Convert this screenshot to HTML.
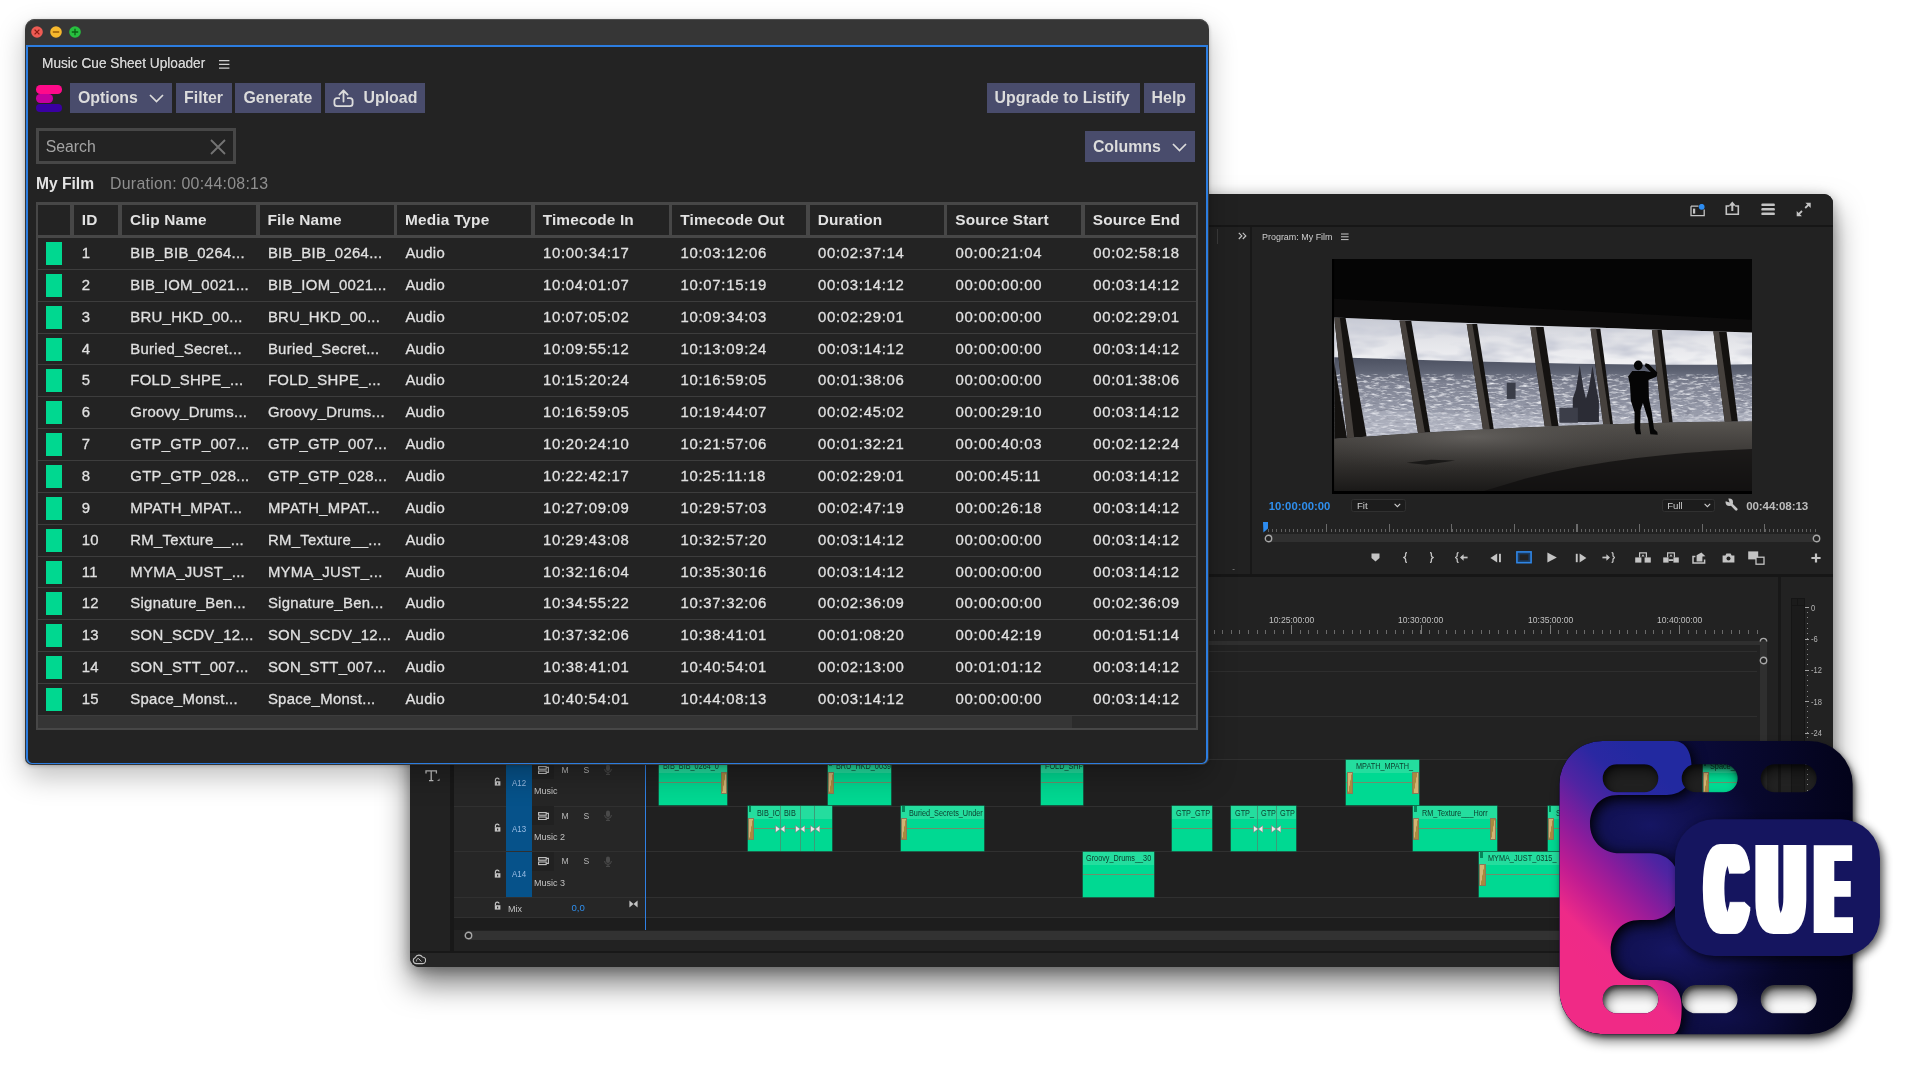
<!DOCTYPE html>
<html lang="en"><head><meta charset="utf-8"><title>Music Cue Sheet Uploader</title>
<style>
*{box-sizing:border-box}
html,body{margin:0;padding:0}
body{width:1920px;height:1080px;background:#fff;overflow:hidden;position:relative;font-family:"Liberation Sans",sans-serif;-webkit-font-smoothing:antialiased}
.abs{position:absolute}
/* ---------- Premiere window ---------- */
#pr{position:absolute;left:410px;top:194px;width:1423px;height:773px;background:#222;border-radius:0 9px 9px 9px;box-shadow:0 17px 30px rgba(0,0,0,.50),0 3px 14px rgba(0,0,0,.30);overflow:hidden;color:#bdbdbd;will-change:transform}
#pr .t{position:absolute;white-space:nowrap;line-height:1}
/* ---------- Plugin window ---------- */
#pw{position:absolute;left:25px;top:19px;width:1183.5px;height:746px;background:#363636;border-radius:10px 10px 7px 7px;box-shadow:0 12px 28px rgba(0,0,0,.25),0 1px 4px rgba(0,0,0,.22),inset 0 1px 0 #4e4e4e;overflow:hidden;will-change:transform}
#pw .panel{position:absolute;left:1px;top:26px;width:1181.5px;height:719px;background:#232323;border:2px solid #2c7de0;border-bottom-width:1.4px;border-radius:0 0 6px 6px}
.tl{position:absolute;top:7px;width:12px;height:12px;border-radius:50%}
.btn{position:absolute;top:83px;height:30px;background:#494c6c;color:#dcdcdc;font-weight:700;font-size:15.9px;line-height:30px;white-space:nowrap}
.btn span{position:absolute;top:.2px;left:0}
#pw .t{position:absolute;white-space:nowrap;line-height:1}
.hc{position:absolute;top:205px;height:30px;background:#232323;color:#e2e2e2;font-weight:700;font-size:15.4px;letter-spacing:.16px;line-height:30.2px;white-space:nowrap;overflow:hidden}
.row{position:absolute;left:38px;width:1158px;height:31px;border-bottom:1.5px solid #3d3d3d;color:#e0e0e0;font-size:14.9px;letter-spacing:.3px;line-height:30.4px;white-space:nowrap}
.row i{position:absolute;left:7.6px;top:4px;width:16.6px;height:23px;background:#00d890}
.row b{position:absolute;top:0;font-weight:400;-webkit-text-stroke:.28px #e0e0e0}
.row b.n{letter-spacing:.72px}
</style></head>
<body>
<div id="pr">
<div class="abs" style="left:0.00px;top:0.00px;width:1423.00px;height:31.20px;background:#212121;"></div>
<div class="abs" style="left:0.00px;top:31.20px;width:1423.00px;height:1.60px;background:#161616;"></div>
<svg class="abs" style="left:1279.60px;top:9.60px;" width="16" height="13" viewBox="0 0 16 13"><path d="M1 2.2H8.5M14.2 5.6V11.6H1V2.2" fill="none" stroke="#c4c4c4" stroke-width="1.3"/><rect x="3" y="4.6" width="2.2" height="5" fill="#c4c4c4"/><circle cx="11.7" cy="2.8" r="2.9" fill="#2d8cf0"/></svg>
<svg class="abs" style="left:1315.40px;top:7.40px;" width="15" height="15" viewBox="0 0 15 15"><path d="M4.4 5H1.3V13.3H13.3V5H10.2" fill="none" stroke="#c4c4c4" stroke-width="1.6"/><path d="M7.3 10V3.6" fill="none" stroke="#c4c4c4" stroke-width="2"/><path d="M3.7 4.8L7.3 .5L10.9 4.8Z" fill="#c4c4c4"/></svg>
<svg class="abs" style="left:1351.00px;top:8.60px;" width="15" height="13" viewBox="0 0 15 13"><rect x=".3" y=".5" width="13.6" height="2.6" rx="1.2" fill="#c4c4c4"/><rect x=".3" y="5" width="13.6" height="2.6" rx="1.2" fill="#c4c4c4"/><rect x=".3" y="9.5" width="13.6" height="2.6" rx="1.2" fill="#c4c4c4"/></svg>
<svg class="abs" style="left:1386.40px;top:8.00px;" width="16" height="15" viewBox="0 0 16 15"><path d="M9.2 6L12.4 2.8M6 9L2.8 12.2" fill="none" stroke="#c4c4c4" stroke-width="1.8"/><path d="M9.4 .7H14.7V6ZM.7 9V14.3H6Z" fill="#c4c4c4"/></svg>
<div class="abs" style="left:798.00px;top:32.80px;width:42.20px;height:347.40px;background:#212121;"></div>
<div class="abs" style="left:840.20px;top:32.80px;width:2.00px;height:347.40px;background:#181818;"></div>
<div class="abs" style="left:807.00px;top:35.00px;width:0.60px;height:15.00px;background:#3a3a3a;"></div>
<svg class="abs" style="left:827.60px;top:37.80px;" width="9" height="8" viewBox="0 0 9 8"><path d="M.8 .8L3.8 3.9L.8 7M4.8 .8L7.8 3.9L4.8 7" fill="none" stroke="#c4c4c4" stroke-width="1.2"/></svg>
<span class="t" style="left:852.40px;top:37.82px;font-size:9.9px;color:#cfcfcf;transform:scaleX(.905);transform-origin:0 0">Program: My Film</span>
<svg class="abs" style="left:931.00px;top:39.20px;" width="8" height="8" viewBox="0 0 8 8"><path d="M0 1H7.6M0 3.8H7.6M0 6.6H7.6" stroke="#c8c8c8" stroke-width="1"/></svg>
<svg class="abs" style="left:921.80px;top:64.80px" width="420.2" height="235.6" viewBox="43 38 1815 1017" preserveAspectRatio="none"><defs>
<linearGradient id="sky" x1="0" y1="0" x2="0" y2="1"><stop offset="0" stop-color="#c2c5cf"/><stop offset=".45" stop-color="#e2e3e8"/><stop offset="1" stop-color="#f4f4f6"/></linearGradient>
<linearGradient id="city" x1="0" y1="0" x2="0" y2="1"><stop offset="0" stop-color="#4b5060"/><stop offset=".16" stop-color="#5d6272"/><stop offset=".3" stop-color="#7d8191"/><stop offset=".6" stop-color="#9599a8"/><stop offset="1" stop-color="#aeb1be"/></linearGradient>
<linearGradient id="floor" x1="0" y1="0" x2="0" y2="1"><stop offset="0" stop-color="#575450"/><stop offset=".3" stop-color="#45423f"/><stop offset=".7" stop-color="#2c2a28"/><stop offset="1" stop-color="#1a1918"/></linearGradient>
<radialGradient id="fl2" cx=".33" cy=".22" r=".5"><stop offset="0" stop-color="#6a6764" stop-opacity=".75"/><stop offset="1" stop-color="#3a3836" stop-opacity="0"/></radialGradient>
<filter id="nz" x="0" y="0" width="100%" height="100%"><feTurbulence type="fractalNoise" baseFrequency=".028 .11" numOctaves="3" seed="7"/><feColorMatrix type="matrix" values="0 0 0 0 .86  0 0 0 0 .87  0 0 0 0 .91  2.6 0 0 0 -1.25"/><feComposite in2="SourceGraphic" operator="in"/></filter>
<filter id="cl" x="0" y="0" width="100%" height="100%"><feTurbulence type="fractalNoise" baseFrequency=".005 .016" numOctaves="3" seed="11"/><feColorMatrix type="matrix" values="0 0 0 0 .58  0 0 0 0 .60  0 0 0 0 .68  2.6 0 0 0 -1.05"/><feComposite in2="SourceGraphic" operator="in"/></filter>
<filter id="nd" x="0" y="0" width="100%" height="100%"><feTurbulence type="fractalNoise" baseFrequency=".03 .12" numOctaves="2" seed="21"/><feColorMatrix type="matrix" values="0 0 0 0 .2  0 0 0 0 .21  0 0 0 0 .27  2.8 0 0 0 -1.5"/><feComposite in2="SourceGraphic" operator="in"/></filter>
<clipPath id="win"><path d="M52 290Q950 330 1858 355V740Q950 745 52 815Z"/></clipPath>
</defs><rect x="43" y="38" width="1815" height="1017" fill="#000"/><rect x="52" y="38" width="1806" height="1002" fill="#050505"/><path d="M52 210Q900 250 1858 300V355Q950 330 52 290Z" fill="#0c0b0b"/><g clip-path="url(#win)"><rect x="52" y="280" width="1806" height="230" fill="url(#sky)"/><rect x="52" y="280" width="1806" height="215" fill="#fff" filter="url(#cl)"/><path d="M52 462Q500 478 1000 488T1858 492V830H52Z" fill="url(#city)"/><rect x="52" y="545" width="1806" height="280" fill="#fff" filter="url(#nd)"/><rect x="52" y="535" width="1806" height="290" fill="#fff" filter="url(#nz)"/><path d="M52 690Q600 700 1000 720T1858 700V830H52Z" fill="#c4c6d0" opacity=".35"/><path d="M1083 742V640L1097 600L1113 498L1130 600L1140 640L1152 600L1168 500L1186 600L1196 650V742Z" fill="#2b2c35"/><rect x="1025" y="680" width="80" height="65" fill="#3c3e49"/><rect x="798" y="572" width="38" height="70" fill="#3a3d48"/><path d="M52 284H100L195 819H110Z" fill="#141210"/><path d="M52 284H76L140 819H110Z" fill="#46413d"/><path d="M335 304H385L468 791H415Z" fill="#141210"/><path d="M335 304H359L445 791H415Z" fill="#46413d"/><path d="M625 319H670L742 774H695Z" fill="#141210"/><path d="M625 319H649L725 774H695Z" fill="#46413d"/><path d="M900 331H957L1022 761H962Z" fill="#141210"/><path d="M900 331H924L992 761H962Z" fill="#46413d"/><path d="M1160 339H1202L1257 754H1215Z" fill="#141210"/><path d="M1160 339H1184L1245 754H1215Z" fill="#46413d"/><path d="M1425 344H1467L1515 748H1470Z" fill="#141210"/><path d="M1425 344H1449L1500 748H1470Z" fill="#46413d"/><path d="M1690 349H1747L1797 746H1740Z" fill="#141210"/><path d="M1690 349H1714L1770 746H1740Z" fill="#46413d"/><path d="M52 480L108 812L52 818Z" fill="#141210"/></g><path d="M52 815Q950 745 1858 740V1040H52Z" fill="url(#floor)"/><path d="M52 815Q950 745 1858 740V1040H52Z" fill="url(#fl2)"/><path d="M880 985Q1300 880 1858 858V1040H700Z" fill="#100f0f" opacity=".75"/><path d="M365 918L470 905L575 908L450 926Z" fill="#1a1918"/><path d="M1347 497a19 21 0 1 1 38 0a19 21 0 1 1 -38 0Z" fill="#050505"/><path d="M1340 522L1322 545L1330 580L1334 650L1350 700L1350 770L1356 795H1378L1374 770L1376 690L1386 660L1408 730L1418 795L1450 797L1448 785L1434 772L1424 700L1412 640L1410 560L1446 545L1448 528L1412 492L1398 488L1394 500L1420 526L1392 522Z" fill="#050505"/></svg>
<span class="t" style="left:858.80px;top:306.53px;font-size:11.3px;color:#2f8fee;font-weight:700">10:00:00:00</span>
<div class="abs" style="left:941.40px;top:304.60px;width:54.20px;height:13.60px;background:#1c1c1c;background:#1c1c1c;border:1px solid #303030;border-radius:2.5px"></div>
<span class="t" style="left:947.00px;top:306.87px;font-size:9.6px;color:#d0d0d0">Fit</span>
<svg class="abs" style="left:984.40px;top:309.20px;" width="7" height="5" viewBox="0 0 7 5"><path d="M.6 .8L3.4 3.6L6.2 .8" fill="none" stroke="#cfcfcf" stroke-width="1.1"/></svg>
<div class="abs" style="left:1251.60px;top:304.60px;width:53.60px;height:13.60px;background:#1c1c1c;background:#1c1c1c;border:1px solid #303030;border-radius:2.5px"></div>
<span class="t" style="left:1257.20px;top:306.87px;font-size:9.6px;color:#d0d0d0">Full</span>
<svg class="abs" style="left:1294.40px;top:309.20px;" width="7" height="5" viewBox="0 0 7 5"><path d="M.6 .8L3.4 3.6L6.2 .8" fill="none" stroke="#cfcfcf" stroke-width="1.1"/></svg>
<svg class="abs" style="left:1314.60px;top:304.40px;" width="13" height="13" viewBox="0 0 13 13"><path d="M5.4 5.4L11.2 11.2" fill="none" stroke="#c4c4c4" stroke-width="2.7" stroke-linecap="round"/><circle cx="4.3" cy="4.3" r="3.7" fill="#c4c4c4"/><path d="M4.6 4.6L-.2 3V-.2H3Z" fill="#222"/></svg>
<span class="t" style="left:1336.20px;top:305.78px;font-size:11.6px;color:#bcbcbc;font-weight:700;letter-spacing:-.12px">00:44:08:13</span>
<div class="abs" style="left:857.60px;top:334.90px;width:551.60px;height:3.50px;background:none;background:repeating-linear-gradient(90deg,#606060 0 1px,transparent 1px 4.173px)"></div>
<div class="abs" style="left:916.00px;top:330.20px;width:494.00px;height:8.20px;background:none;background:repeating-linear-gradient(90deg,#6a6a6a 0 1.1px,transparent 1.1px 62.6px)"></div>
<div class="abs" style="left:855.60px;top:339.80px;width:554.00px;height:8.40px;background:#303030;border-radius:4px"></div>
<svg class="abs" style="left:853.00px;top:327.80px;" width="6" height="11" viewBox="0 0 6 11"><path d="M0 0H5V6.6L.4 10.6Z" fill="#2d8cf0"/></svg>
<svg class="abs" style="left:854.40px;top:339.50px;" width="9" height="9" viewBox="0 0 9 9"><circle cx="4.5" cy="4.5" r="3.2" fill="#222" stroke="#a8a8a8" stroke-width="1.4"/></svg>
<svg class="abs" style="left:1402.10px;top:339.50px;" width="9" height="9" viewBox="0 0 9 9"><circle cx="4.5" cy="4.5" r="3.2" fill="#222" stroke="#a8a8a8" stroke-width="1.4"/></svg>
<svg class="abs" style="left:960.50px;top:359.20px;" width="9" height="9" viewBox="0 0 9 9"><path d="M.5 .5H8.5V5L4.5 8.6L.5 5Z" fill="#c4c4c4"/></svg>
<svg class="abs" style="left:992.70px;top:358.20px;" width="5" height="11" viewBox="0 0 5 11"><path d="M4 .6C2.4 .6 2.6 2 2.6 3.4C2.6 4.8 1.4 5.2 .8 5.5C1.4 5.8 2.6 6.2 2.6 7.6C2.6 9 2.4 10.4 4 10.4" fill="none" stroke="#c4c4c4" stroke-width="1.3"/></svg>
<svg class="abs" style="left:1018.50px;top:358.20px;" width="5" height="11" viewBox="0 0 5 11"><path d="M1 .6C2.6 .6 2.4 2 2.4 3.4C2.4 4.8 3.6 5.2 4.2 5.5C3.6 5.8 2.4 6.2 2.4 7.6C2.4 9 2.6 10.4 1 10.4" fill="none" stroke="#c4c4c4" stroke-width="1.3"/></svg>
<svg class="abs" style="left:1044.50px;top:358.20px;" width="13" height="11" viewBox="0 0 13 11"><path d="M3.6 .6C2 .6 2.2 2 2.2 3.4C2.2 4.8 1.2 5.2 .6 5.5C1.2 5.8 2.2 6.2 2.2 7.6C2.2 9 2 10.4 3.6 10.4" fill="none" stroke="#c4c4c4" stroke-width="1.3"/><path d="M12.6 5.5H6.4" fill="none" stroke="#c4c4c4" stroke-width="1.7"/><path d="M8.6 2.2L5 5.5L8.6 8.8Z" fill="#c4c4c4"/></svg>
<svg class="abs" style="left:1079.60px;top:358.70px;" width="12" height="10" viewBox="0 0 12 10"><path d="M7.2 .6V9.4L.4 5Z" fill="#c4c4c4"/><rect x="9" y=".8" width="1.9" height="8.4" fill="#c4c4c4"/></svg>
<svg class="abs" style="left:1105.60px;top:357.40px;" width="16" height="12.6" viewBox="0 0 16 12.6"><rect x=".9" y=".9" width="14.2" height="10.8" fill="#1b3a5e" stroke="#2f86e6" stroke-width="1.6"/><rect x="3.6" y="3.4" width="8.8" height="5.8" fill="#222"/></svg>
<svg class="abs" style="left:1136.90px;top:358.20px;" width="10" height="11" viewBox="0 0 10 11"><path d="M.4 .4L9.8 5.5L.4 10.6Z" fill="#c4c4c4"/></svg>
<svg class="abs" style="left:1164.60px;top:358.70px;" width="12" height="10" viewBox="0 0 12 10"><rect x=".8" y=".8" width="1.9" height="8.4" fill="#c4c4c4"/><path d="M4.6 .6V9.4L11.4 5Z" fill="#c4c4c4"/></svg>
<svg class="abs" style="left:1191.50px;top:358.20px;" width="13" height="11" viewBox="0 0 13 11"><path d="M9.6 .6C11.2 .6 11 2 11 3.4C11 4.8 12 5.2 12.6 5.5C12 5.8 11 6.2 11 7.6C11 9 11.2 10.4 9.6 10.4" fill="none" stroke="#c4c4c4" stroke-width="1.3"/><path d="M.4 5.5H6.4" fill="none" stroke="#c4c4c4" stroke-width="1.7"/><path d="M4.4 2.2L8 5.5L4.4 8.8Z" fill="#c4c4c4"/></svg>
<svg class="abs" style="left:1225.00px;top:358.20px;" width="16" height="11" viewBox="0 0 16 11"><rect x=".2" y="5.4" width="6.2" height="5.2" fill="#c4c4c4"/><rect x="9.6" y="5.4" width="6.2" height="5.2" fill="#c4c4c4"/><path d="M4.6 5.4V.8H11.4V5.4" fill="none" stroke="#c4c4c4" stroke-width="1.2"/><path d="M6.4 4.4L8 2.2L9.6 4.4Z" fill="#c4c4c4"/></svg>
<svg class="abs" style="left:1253.00px;top:358.20px;" width="16" height="11" viewBox="0 0 16 11"><rect x=".2" y="5.4" width="5.4" height="5.2" fill="#c4c4c4"/><rect x="10.4" y="5.4" width="5.4" height="5.2" fill="#c4c4c4"/><rect x="5.6" y="7.2" width="4.8" height="1.8" fill="#c4c4c4"/><path d="M4.6 5.4V.8H11.4V5.4" fill="none" stroke="#c4c4c4" stroke-width="1.2"/><path d="M6.4 4.4L8 2.2L9.6 4.4Z" fill="#c4c4c4"/></svg>
<svg class="abs" style="left:1282.40px;top:357.70px;" width="14" height="12" viewBox="0 0 14 12"><path d="M3.4 4.6H1V11H12.6V7.6" fill="none" stroke="#c4c4c4" stroke-width="1.5"/><path d="M4.6 9.4V3.2L9.4 .4L13.4 4.2L10.4 4.6V9.4Z" fill="#c4c4c4"/></svg>
<svg class="abs" style="left:1311.80px;top:358.70px;" width="13" height="10" viewBox="0 0 13 10"><path d="M.6 2.4H3.4L4.4 .6H8.6L9.6 2.4H12.4V9.4H.6Z" fill="#c4c4c4"/><circle cx="6.5" cy="5.6" r="2" fill="#222"/></svg>
<svg class="abs" style="left:1337.90px;top:356.70px;" width="17" height="14" viewBox="0 0 17 14"><rect x=".2" y=".4" width="10" height="8" fill="#c4c4c4"/><rect x="8" y="6.2" width="8" height="7" fill="#222" stroke="#c4c4c4" stroke-width="1.3"/></svg>
<svg class="abs" style="left:1401.30px;top:358.70px;" width="10" height="10" viewBox="0 0 10 10"><path d="M5 .4V9.6M.4 5H9.6" fill="none" stroke="#c4c4c4" stroke-width="2.2"/></svg>
<span class="t" style="left:822.20px;top:371.23px;font-size:8px;color:#9a9a9a">-</span>
<div class="abs" style="left:798.00px;top:380.20px;width:625.00px;height:2.60px;background:#161616;"></div>
<span class="t" style="left:858.90px;top:421.16px;font-size:9.5px;color:#c2c2c2;transform:scaleX(.9);transform-origin:0 0">10:25:00:00</span>
<span class="t" style="left:988.20px;top:421.16px;font-size:9.5px;color:#c2c2c2;transform:scaleX(.9);transform-origin:0 0">10:30:00:00</span>
<span class="t" style="left:1117.50px;top:421.16px;font-size:9.5px;color:#c2c2c2;transform:scaleX(.9);transform-origin:0 0">10:35:00:00</span>
<span class="t" style="left:1246.80px;top:421.16px;font-size:9.5px;color:#c2c2c2;transform:scaleX(.9);transform-origin:0 0">10:40:00:00</span>
<div class="abs" style="left:795.30px;top:436.00px;width:553.00px;height:3.80px;background:none;background:repeating-linear-gradient(90deg,#6a6a6a 0 1px,transparent 1px 8.62px)"></div>
<div class="abs" style="left:752.20px;top:431.40px;width:594.80px;height:8.40px;background:none;background:repeating-linear-gradient(90deg,#7c7c7c 0 1.1px,transparent 1.1px 129.3px)"></div>
<div class="abs" style="left:798.00px;top:447.00px;width:559.00px;height:4.20px;background:#2f2f2f;"></div>
<div class="abs" style="left:1349.60px;top:447.00px;width:7.40px;height:276.00px;background:#2f2f2f;border-radius:3.7px 3.7px 0 0"></div>
<svg class="abs" style="left:1348.80px;top:442.80px;" width="9" height="9" viewBox="0 0 9 9"><path d="M1.3 4.6A3.2 3.2 0 0 1 7.7 4.6" fill="none" stroke="#a8a8a8" stroke-width="1.4"/></svg>
<svg class="abs" style="left:1348.80px;top:461.50px;" width="9" height="9" viewBox="0 0 9 9"><circle cx="4.5" cy="4.5" r="3.2" fill="#222" stroke="#a8a8a8" stroke-width="1.4"/></svg>
<div class="abs" style="left:798.00px;top:456.60px;width:549.00px;height:1.00px;background:#2e2e2e;"></div>
<div class="abs" style="left:798.00px;top:476.70px;width:549.00px;height:1.00px;background:#2e2e2e;"></div>
<div class="abs" style="left:798.00px;top:522.20px;width:549.00px;height:1.00px;background:#2e2e2e;"></div>
<div class="abs" style="left:798.00px;top:565.40px;width:549.00px;height:1.00px;background:#2e2e2e;"></div>
<div class="abs" style="left:0.00px;top:565.40px;width:40.40px;height:192.00px;background:#222;"></div>
<div class="abs" style="left:40.40px;top:383.00px;width:3.40px;height:375.00px;background:#181818;"></div>
<div class="abs" style="left:43.80px;top:565.40px;width:191.60px;height:158.00px;background:#262626;"></div>
<div class="abs" style="left:235.40px;top:566.00px;width:1112.00px;height:137.00px;background:#202020;"></div>
<div class="abs" style="left:43.80px;top:565.40px;width:1304.00px;height:1.00px;background:#303030;"></div>
<div class="abs" style="left:43.80px;top:611.60px;width:1304.00px;height:1.00px;background:#303030;"></div>
<div class="abs" style="left:43.80px;top:657.30px;width:1304.00px;height:1.00px;background:#303030;"></div>
<div class="abs" style="left:43.80px;top:703.00px;width:1304.00px;height:1.00px;background:#303030;"></div>
<div class="abs" style="left:43.80px;top:723.40px;width:1304.00px;height:1.00px;background:#303030;"></div>
<div class="abs" style="left:43.80px;top:724.40px;width:1304.00px;height:11.60px;background:#1d1d1d;"></div>
<div class="abs" style="left:54.00px;top:736.60px;width:1303.00px;height:9.40px;background:#323232;border-radius:4.7px 0 0 4.7px"></div>
<svg class="abs" style="left:54.20px;top:737.20px;" width="9" height="9" viewBox="0 0 9 9"><circle cx="4.5" cy="4.5" r="3.2" fill="#222" stroke="#a8a8a8" stroke-width="1.4"/></svg>
<svg class="abs" style="left:14.60px;top:576.00px;" width="16" height="12" viewBox="0 0 16 12"><path d="M1 3.4V.8H11.4V3.4M6.2 .8V10.4M4 10.6H8.4" fill="none" stroke="#c4c4c4" stroke-width="1.3"/><path d="M14.6 8.4V11H12Z" fill="#9a9a9a"/></svg>
<div class="abs" style="left:96.30px;top:566.00px;width:25.80px;height:45.60px;background:#06528a;"></div>
<span class="t" style="left:102.20px;top:584.72px;font-size:8.6px;color:#9bbde4;transform:scaleX(.92);transform-origin:0 0">A12</span>
<svg class="abs" style="left:84.20px;top:583.20px;" width="8" height="9" viewBox="0 0 8 9"><path d="M1.4 4.2V2.8A2 2 0 0 1 5.2 2.4" fill="none" stroke="#c4c4c4" stroke-width="1.2"/><rect x=".8" y="4.2" width="5.6" height="4.4" fill="#c4c4c4"/><rect x="3" y="5.6" width="1.2" height="1.8" fill="#262626"/></svg>
<div class="abs" style="left:122.30px;top:566.00px;width:21.40px;height:18.60px;background:#212121;"></div>
<svg class="abs" style="left:127.60px;top:571.50px;" width="11" height="8.4" viewBox="0 0 11 8.4"><rect x=".6" y=".6" width="7.6" height="2.6" fill="none" stroke="#c4c4c4" stroke-width="1.1"/><rect x=".6" y="5" width="7.6" height="2.6" fill="none" stroke="#c4c4c4" stroke-width="1.1"/><path d="M8.4 1.4H10.4V6.4H8.4" fill="none" stroke="#c4c4c4" stroke-width="1.1"/></svg>
<span class="t" style="left:151.40px;top:571.52px;font-size:8.6px;color:#b8b8b8">M</span>
<span class="t" style="left:173.40px;top:571.52px;font-size:8.6px;color:#b8b8b8">S</span>
<svg class="abs" style="left:194.20px;top:570.30px;" width="8" height="11" viewBox="0 0 8 11"><rect x="2" y=".4" width="4" height="6.6" rx="2" fill="#4a4a4a"/><path d="M.6 5A3.4 3.4 0 0 0 7.4 5M4 8.4V10.4M2 10.4H6" fill="none" stroke="#4a4a4a" stroke-width="1"/></svg>
<span class="t" style="left:123.80px;top:591.99px;font-size:9.7px;color:#c2c2c2;transform:scaleX(.93);transform-origin:0 0">Music</span>
<div class="abs" style="left:96.30px;top:612.20px;width:25.80px;height:45.10px;background:#06528a;"></div>
<span class="t" style="left:102.20px;top:630.67px;font-size:8.6px;color:#9bbde4;transform:scaleX(.92);transform-origin:0 0">A13</span>
<svg class="abs" style="left:84.20px;top:629.15px;" width="8" height="9" viewBox="0 0 8 9"><path d="M1.4 4.2V2.8A2 2 0 0 1 5.2 2.4" fill="none" stroke="#c4c4c4" stroke-width="1.2"/><rect x=".8" y="4.2" width="5.6" height="4.4" fill="#c4c4c4"/><rect x="3" y="5.6" width="1.2" height="1.8" fill="#262626"/></svg>
<div class="abs" style="left:122.30px;top:612.20px;width:21.40px;height:18.60px;background:#212121;"></div>
<svg class="abs" style="left:127.60px;top:617.60px;" width="11" height="8.4" viewBox="0 0 11 8.4"><rect x=".6" y=".6" width="7.6" height="2.6" fill="none" stroke="#c4c4c4" stroke-width="1.1"/><rect x=".6" y="5" width="7.6" height="2.6" fill="none" stroke="#c4c4c4" stroke-width="1.1"/><path d="M8.4 1.4H10.4V6.4H8.4" fill="none" stroke="#c4c4c4" stroke-width="1.1"/></svg>
<span class="t" style="left:151.40px;top:617.62px;font-size:8.6px;color:#b8b8b8">M</span>
<span class="t" style="left:173.40px;top:617.62px;font-size:8.6px;color:#b8b8b8">S</span>
<svg class="abs" style="left:194.20px;top:616.40px;" width="8" height="11" viewBox="0 0 8 11"><rect x="2" y=".4" width="4" height="6.6" rx="2" fill="#4a4a4a"/><path d="M.6 5A3.4 3.4 0 0 0 7.4 5M4 8.4V10.4M2 10.4H6" fill="none" stroke="#4a4a4a" stroke-width="1"/></svg>
<span class="t" style="left:123.80px;top:638.09px;font-size:9.7px;color:#c2c2c2;transform:scaleX(.93);transform-origin:0 0">Music 2</span>
<div class="abs" style="left:96.30px;top:658.00px;width:25.80px;height:45.00px;background:#06528a;"></div>
<span class="t" style="left:102.20px;top:676.42px;font-size:8.6px;color:#9bbde4;transform:scaleX(.92);transform-origin:0 0">A14</span>
<svg class="abs" style="left:84.20px;top:674.90px;" width="8" height="9" viewBox="0 0 8 9"><path d="M1.4 4.2V2.8A2 2 0 0 1 5.2 2.4" fill="none" stroke="#c4c4c4" stroke-width="1.2"/><rect x=".8" y="4.2" width="5.6" height="4.4" fill="#c4c4c4"/><rect x="3" y="5.6" width="1.2" height="1.8" fill="#262626"/></svg>
<div class="abs" style="left:122.30px;top:658.00px;width:21.40px;height:18.60px;background:#212121;"></div>
<svg class="abs" style="left:127.60px;top:663.40px;" width="11" height="8.4" viewBox="0 0 11 8.4"><rect x=".6" y=".6" width="7.6" height="2.6" fill="none" stroke="#c4c4c4" stroke-width="1.1"/><rect x=".6" y="5" width="7.6" height="2.6" fill="none" stroke="#c4c4c4" stroke-width="1.1"/><path d="M8.4 1.4H10.4V6.4H8.4" fill="none" stroke="#c4c4c4" stroke-width="1.1"/></svg>
<span class="t" style="left:151.40px;top:663.42px;font-size:8.6px;color:#b8b8b8">M</span>
<span class="t" style="left:173.40px;top:663.42px;font-size:8.6px;color:#b8b8b8">S</span>
<svg class="abs" style="left:194.20px;top:662.20px;" width="8" height="11" viewBox="0 0 8 11"><rect x="2" y=".4" width="4" height="6.6" rx="2" fill="#4a4a4a"/><path d="M.6 5A3.4 3.4 0 0 0 7.4 5M4 8.4V10.4M2 10.4H6" fill="none" stroke="#4a4a4a" stroke-width="1"/></svg>
<span class="t" style="left:123.80px;top:683.89px;font-size:9.7px;color:#c2c2c2;transform:scaleX(.93);transform-origin:0 0">Music 3</span>
<svg class="abs" style="left:84.20px;top:707.20px;" width="8" height="9" viewBox="0 0 8 9"><path d="M1.4 4.2V2.8A2 2 0 0 1 5.2 2.4" fill="none" stroke="#c4c4c4" stroke-width="1.2"/><rect x=".8" y="4.2" width="5.6" height="4.4" fill="#c4c4c4"/><rect x="3" y="5.6" width="1.2" height="1.8" fill="#262626"/></svg>
<span class="t" style="left:97.90px;top:709.59px;font-size:9.7px;color:#c2c2c2;transform:scaleX(.93);transform-origin:0 0">Mix</span>
<span class="t" style="left:161.40px;top:708.87px;font-size:9.6px;color:#2f8fee">0,0</span>
<svg class="abs" style="left:218.80px;top:706.40px;" width="9" height="8" viewBox="0 0 9 8"><path d="M.4 .6L4.5 4L.4 7.4ZM8.6 .6L4.5 4L8.6 7.4Z" fill="#c4c4c4"/></svg>
<div class="abs" style="left:249.00px;top:566.30px;width:68.30px;height:44.70px;background:#00d992;overflow:hidden;box-shadow:0 0 0 .5px #0a8f62"><div class="abs" style="left:0;top:0;width:100%;height:12.6px;background:#24dd9e"></div><div class="abs" style="left:0;top:21.6px;width:100%;height:1.1px;background:#6f8f6c"></div><div class="abs" style="right:0.3px;top:11.6px;width:6.2px;height:22.4px;background:linear-gradient(100deg,#a98a3e 0 48%,#d2b473 52% 100%);border:.6px solid #8a7a5a"></div><span class="t" style="left:3.60px;top:2.19px;font-size:8.4px;color:#0b3b2b;width:73.7px;overflow:hidden;padding-bottom:3px;transform:scaleX(.87);transform-origin:0 0">BIB_BIB_0264_0</span></div>
<div class="abs" style="left:418.00px;top:566.30px;width:63.00px;height:44.70px;background:#00d992;overflow:hidden;box-shadow:0 0 0 .5px #0a8f62"><div class="abs" style="left:0;top:0;width:100%;height:12.6px;background:#24dd9e"></div><div class="abs" style="left:0;top:21.6px;width:100%;height:1.1px;background:#6f8f6c"></div><div class="abs" style="left:1px;top:0;width:2.6px;height:6px;background:#05875a"></div><div class="abs" style="left:0.3px;top:11.6px;width:6.2px;height:22.4px;background:linear-gradient(100deg,#d2b473 0 48%,#a98a3e 52% 100%);border:.6px solid #8a7a5a"></div><span class="t" style="left:8.00px;top:2.19px;font-size:8.4px;color:#0b3b2b;width:62.5px;overflow:hidden;padding-bottom:3px;transform:scaleX(.87);transform-origin:0 0">BRU_HKD_0039</span></div>
<div class="abs" style="left:631.00px;top:566.30px;width:42.00px;height:44.70px;background:#00d992;overflow:hidden;box-shadow:0 0 0 .5px #0a8f62"><div class="abs" style="left:0;top:0;width:100%;height:12.6px;background:#24dd9e"></div><div class="abs" style="left:0;top:21.6px;width:100%;height:1.1px;background:#6f8f6c"></div><span class="t" style="left:3.60px;top:2.19px;font-size:8.4px;color:#0b3b2b;width:43.4px;overflow:hidden;padding-bottom:3px;transform:scaleX(.87);transform-origin:0 0">FOLD_SHP</span></div>
<div class="abs" style="left:936.30px;top:566.30px;width:72.60px;height:44.70px;background:#00d992;overflow:hidden;box-shadow:0 0 0 .5px #0a8f62"><div class="abs" style="left:0;top:0;width:100%;height:12.6px;background:#24dd9e"></div><div class="abs" style="left:0;top:21.6px;width:100%;height:1.1px;background:#6f8f6c"></div><div class="abs" style="left:0.3px;top:11.6px;width:6.2px;height:22.4px;background:linear-gradient(100deg,#d2b473 0 48%,#a98a3e 52% 100%);border:.6px solid #8a7a5a"></div><div class="abs" style="right:0.3px;top:11.6px;width:6.2px;height:22.4px;background:linear-gradient(100deg,#a98a3e 0 48%,#d2b473 52% 100%);border:.6px solid #8a7a5a"></div><span class="t" style="left:9.70px;top:2.19px;font-size:8.4px;color:#0b3b2b;width:71.6px;overflow:hidden;padding-bottom:3px;transform:scaleX(.87);transform-origin:0 0">MPATH_MPATH_</span></div>
<div class="abs" style="left:1292.70px;top:566.30px;width:49.30px;height:44.70px;background:#00d992;overflow:hidden;box-shadow:0 0 0 .5px #0a8f62"><div class="abs" style="left:0;top:0;width:100%;height:12.6px;background:#24dd9e"></div><div class="abs" style="left:0;top:21.6px;width:100%;height:1.1px;background:#6f8f6c"></div><div class="abs" style="left:1px;top:0;width:2.6px;height:6px;background:#05875a"></div><div class="abs" style="left:0.3px;top:11.6px;width:6.2px;height:22.4px;background:linear-gradient(100deg,#d2b473 0 48%,#a98a3e 52% 100%);border:.6px solid #8a7a5a"></div><span class="t" style="left:7.70px;top:2.19px;font-size:8.4px;color:#0b3b2b;width:47.1px;overflow:hidden;padding-bottom:3px;transform:scaleX(.87);transform-origin:0 0">Space_</span></div>
<div class="abs" style="left:337.80px;top:612.40px;width:84.10px;height:44.50px;background:#00d992;overflow:hidden;box-shadow:0 0 0 .5px #0a8f62"><div class="abs" style="left:0;top:0;width:100%;height:12.6px;background:#24dd9e"></div><div class="abs" style="left:0;top:21.6px;width:100%;height:1.1px;background:#6f8f6c"></div><div class="abs" style="left:1px;top:0;width:2.6px;height:6px;background:#05875a"></div><div class="abs" style="left:0.3px;top:11.6px;width:6.2px;height:22.4px;background:linear-gradient(100deg,#d2b473 0 48%,#a98a3e 52% 100%);border:.6px solid #8a7a5a"></div><div class="abs" style="left:32.40px;top:0;width:.9px;height:100%;background:#3c9c78"></div><svg class="abs" style="left:27.50px;top:18.2px" width="10.4" height="8" viewBox="0 0 9 7"><path d="M.4 .4L4.5 3.5L.4 6.6ZM8.6 .4L4.5 3.5L8.6 6.6Z" fill="#e9e9e9" stroke="#777" stroke-width=".5"/></svg><div class="abs" style="left:51.90px;top:0;width:.9px;height:100%;background:#3c9c78"></div><svg class="abs" style="left:47.00px;top:18.2px" width="10.4" height="8" viewBox="0 0 9 7"><path d="M.4 .4L4.5 3.5L.4 6.6ZM8.6 .4L4.5 3.5L8.6 6.6Z" fill="#e9e9e9" stroke="#777" stroke-width=".5"/></svg><div class="abs" style="left:66.70px;top:0;width:.9px;height:100%;background:#3c9c78"></div><svg class="abs" style="left:61.80px;top:18.2px" width="10.4" height="8" viewBox="0 0 9 7"><path d="M.4 .4L4.5 3.5L.4 6.6ZM8.6 .4L4.5 3.5L8.6 6.6Z" fill="#e9e9e9" stroke="#777" stroke-width=".5"/></svg><span class="t" style="left:8.80px;top:2.19px;font-size:8.4px;color:#0b3b2b;width:26.4px;overflow:hidden;padding-bottom:3px;transform:scaleX(.87);transform-origin:0 0">BIB_IO</span><span class="t" style="left:36.60px;top:2.19px;font-size:8.4px;color:#0b3b2b;width:16.9px;overflow:hidden;padding-bottom:3px;transform:scaleX(.87);transform-origin:0 0">BIB</span></div>
<div class="abs" style="left:491.00px;top:612.40px;width:83.20px;height:44.50px;background:#00d992;overflow:hidden;box-shadow:0 0 0 .5px #0a8f62"><div class="abs" style="left:0;top:0;width:100%;height:12.6px;background:#24dd9e"></div><div class="abs" style="left:0;top:21.6px;width:100%;height:1.1px;background:#6f8f6c"></div><div class="abs" style="left:1px;top:0;width:2.6px;height:6px;background:#05875a"></div><div class="abs" style="left:0.3px;top:11.6px;width:6.2px;height:22.4px;background:linear-gradient(100deg,#d2b473 0 48%,#a98a3e 52% 100%);border:.6px solid #8a7a5a"></div><span class="t" style="left:8.40px;top:2.19px;font-size:8.4px;color:#0b3b2b;width:85.3px;overflow:hidden;padding-bottom:3px;transform:scaleX(.87);transform-origin:0 0">Buried_Secrets_Under</span></div>
<div class="abs" style="left:762.20px;top:612.40px;width:39.60px;height:44.50px;background:#00d992;overflow:hidden;box-shadow:0 0 0 .5px #0a8f62"><div class="abs" style="left:0;top:0;width:100%;height:12.6px;background:#24dd9e"></div><div class="abs" style="left:0;top:21.6px;width:100%;height:1.1px;background:#6f8f6c"></div><span class="t" style="left:3.60px;top:2.19px;font-size:8.4px;color:#0b3b2b;width:40.7px;overflow:hidden;padding-bottom:3px;transform:scaleX(.87);transform-origin:0 0">GTP_GTP</span></div>
<div class="abs" style="left:821.30px;top:612.40px;width:64.60px;height:44.50px;background:#00d992;overflow:hidden;box-shadow:0 0 0 .5px #0a8f62"><div class="abs" style="left:0;top:0;width:100%;height:12.6px;background:#24dd9e"></div><div class="abs" style="left:0;top:21.6px;width:100%;height:1.1px;background:#6f8f6c"></div><div class="abs" style="left:26.20px;top:0;width:.9px;height:100%;background:#3c9c78"></div><svg class="abs" style="left:21.30px;top:18.2px" width="10.4" height="8" viewBox="0 0 9 7"><path d="M.4 .4L4.5 3.5L.4 6.6ZM8.6 .4L4.5 3.5L8.6 6.6Z" fill="#e9e9e9" stroke="#777" stroke-width=".5"/></svg><div class="abs" style="left:44.40px;top:0;width:.9px;height:100%;background:#3c9c78"></div><svg class="abs" style="left:39.50px;top:18.2px" width="10.4" height="8" viewBox="0 0 9 7"><path d="M.4 .4L4.5 3.5L.4 6.6ZM8.6 .4L4.5 3.5L8.6 6.6Z" fill="#e9e9e9" stroke="#777" stroke-width=".5"/></svg><span class="t" style="left:3.50px;top:2.19px;font-size:8.4px;color:#0b3b2b;width:25.4px;overflow:hidden;padding-bottom:3px;transform:scaleX(.87);transform-origin:0 0">GTP_</span><span class="t" style="left:29.30px;top:2.19px;font-size:8.4px;color:#0b3b2b;width:16.7px;overflow:hidden;padding-bottom:3px;transform:scaleX(.87);transform-origin:0 0">GTP</span><span class="t" style="left:48.30px;top:2.19px;font-size:8.4px;color:#0b3b2b;width:18.0px;overflow:hidden;padding-bottom:3px;transform:scaleX(.87);transform-origin:0 0">GTP</span></div>
<div class="abs" style="left:1003.00px;top:612.40px;width:83.70px;height:44.50px;background:#00d992;overflow:hidden;box-shadow:0 0 0 .5px #0a8f62"><div class="abs" style="left:0;top:0;width:100%;height:12.6px;background:#24dd9e"></div><div class="abs" style="left:0;top:21.6px;width:100%;height:1.1px;background:#6f8f6c"></div><div class="abs" style="left:1px;top:0;width:2.6px;height:6px;background:#05875a"></div><div class="abs" style="left:0.3px;top:11.6px;width:6.2px;height:22.4px;background:linear-gradient(100deg,#d2b473 0 48%,#a98a3e 52% 100%);border:.6px solid #8a7a5a"></div><div class="abs" style="right:0.3px;top:11.6px;width:6.2px;height:22.4px;background:linear-gradient(100deg,#a98a3e 0 48%,#d2b473 52% 100%);border:.6px solid #8a7a5a"></div><span class="t" style="left:8.60px;top:2.19px;font-size:8.4px;color:#0b3b2b;width:85.6px;overflow:hidden;padding-bottom:3px;transform:scaleX(.87);transform-origin:0 0">RM_Texture___Horr</span></div>
<div class="abs" style="left:1137.70px;top:612.40px;width:92.30px;height:44.50px;background:#00d992;overflow:hidden;box-shadow:0 0 0 .5px #0a8f62"><div class="abs" style="left:0;top:0;width:100%;height:12.6px;background:#24dd9e"></div><div class="abs" style="left:0;top:21.6px;width:100%;height:1.1px;background:#6f8f6c"></div><div class="abs" style="left:1px;top:0;width:2.6px;height:6px;background:#05875a"></div><div class="abs" style="left:0.3px;top:11.6px;width:6.2px;height:22.4px;background:linear-gradient(100deg,#d2b473 0 48%,#a98a3e 52% 100%);border:.6px solid #8a7a5a"></div><span class="t" style="left:8.50px;top:2.19px;font-size:8.4px;color:#0b3b2b;width:95.6px;overflow:hidden;padding-bottom:3px;transform:scaleX(.87);transform-origin:0 0">S</span></div>
<div class="abs" style="left:673.00px;top:658.00px;width:71.20px;height:45.00px;background:#00d992;overflow:hidden;box-shadow:0 0 0 .5px #0a8f62"><div class="abs" style="left:0;top:0;width:100%;height:12.6px;background:#24dd9e"></div><div class="abs" style="left:0;top:21.6px;width:100%;height:1.1px;background:#6f8f6c"></div><span class="t" style="left:3.40px;top:2.19px;font-size:8.4px;color:#0b3b2b;width:77.2px;overflow:hidden;padding-bottom:3px;transform:scaleX(.87);transform-origin:0 0">Groovy_Drums__30</span></div>
<div class="abs" style="left:1069.20px;top:658.00px;width:86.80px;height:45.00px;background:#00d992;overflow:hidden;box-shadow:0 0 0 .5px #0a8f62"><div class="abs" style="left:0;top:0;width:100%;height:12.6px;background:#24dd9e"></div><div class="abs" style="left:0;top:21.6px;width:100%;height:1.1px;background:#6f8f6c"></div><div class="abs" style="left:1px;top:0;width:2.6px;height:6px;background:#05875a"></div><div class="abs" style="left:0.3px;top:11.6px;width:6.2px;height:22.4px;background:linear-gradient(100deg,#d2b473 0 48%,#a98a3e 52% 100%);border:.6px solid #8a7a5a"></div><div class="abs" style="right:0.3px;top:11.6px;width:6.2px;height:22.4px;background:linear-gradient(100deg,#a98a3e 0 48%,#d2b473 52% 100%);border:.6px solid #8a7a5a"></div><span class="t" style="left:8.60px;top:2.19px;font-size:8.4px;color:#0b3b2b;width:89.2px;overflow:hidden;padding-bottom:3px;transform:scaleX(.87);transform-origin:0 0">MYMA_JUST_0315_</span></div>
<div class="abs" style="left:235.00px;top:566.00px;width:1.10px;height:170.00px;background:#2f80e4;"></div>
<div class="abs" style="left:1368.20px;top:383.00px;width:3.00px;height:375.00px;background:#181818;"></div>
<div class="abs" style="left:1371.20px;top:383.00px;width:52.00px;height:375.00px;background:#222;"></div>
<div class="abs" style="left:1380.90px;top:403.80px;width:13.80px;height:350.00px;background:#1b1b1b;border:1px solid #151515"></div>
<div class="abs" style="left:1387.40px;top:404.80px;width:1.00px;height:6.00px;background:#151515;"></div>
<div class="abs" style="left:1381.90px;top:410.60px;width:11.80px;height:1.00px;background:#151515;"></div>
<div class="abs" style="left:1396.60px;top:413.40px;width:1.20px;height:340.00px;background:none;background:repeating-linear-gradient(180deg,#8a8a8a 0 1px,transparent 1px 5.22px)"></div>
<div class="abs" style="left:1395.40px;top:413.30px;width:4.00px;height:1.10px;background:#a0a0a0;"></div>
<span class="t" style="left:1401.20px;top:409.69px;font-size:8.4px;color:#b4b4b4;transform:scaleX(.9);transform-origin:0 0">0</span>
<div class="abs" style="left:1395.40px;top:444.60px;width:4.00px;height:1.10px;background:#a0a0a0;"></div>
<span class="t" style="left:1401.20px;top:440.99px;font-size:8.4px;color:#b4b4b4;transform:scaleX(.9);transform-origin:0 0">-6</span>
<div class="abs" style="left:1395.40px;top:475.90px;width:4.00px;height:1.10px;background:#a0a0a0;"></div>
<span class="t" style="left:1401.20px;top:472.29px;font-size:8.4px;color:#b4b4b4;transform:scaleX(.9);transform-origin:0 0">-12</span>
<div class="abs" style="left:1395.40px;top:507.20px;width:4.00px;height:1.10px;background:#a0a0a0;"></div>
<span class="t" style="left:1401.20px;top:503.59px;font-size:8.4px;color:#b4b4b4;transform:scaleX(.9);transform-origin:0 0">-18</span>
<div class="abs" style="left:1395.40px;top:538.50px;width:4.00px;height:1.10px;background:#a0a0a0;"></div>
<span class="t" style="left:1401.20px;top:534.89px;font-size:8.4px;color:#b4b4b4;transform:scaleX(.9);transform-origin:0 0">-24</span>
<div class="abs" style="left:1395.40px;top:569.80px;width:4.00px;height:1.10px;background:#a0a0a0;"></div>
<span class="t" style="left:1401.20px;top:566.19px;font-size:8.4px;color:#b4b4b4;transform:scaleX(.9);transform-origin:0 0">-30</span>
<div class="abs" style="left:0.00px;top:756.60px;width:1423.00px;height:2.00px;background:#181818;"></div>
<div class="abs" style="left:0.00px;top:758.60px;width:1423.00px;height:15.00px;background:#262626;"></div>
<svg class="abs" style="left:1.60px;top:760.40px;" width="14" height="11" viewBox="0 0 14 11"><path d="M4.2 9.6A3.2 3.2 0 0 1 3.4 3.4A4 4 0 0 1 10.4 3A3.3 3.3 0 0 1 10.2 9.6Z" fill="none" stroke="#c4c4c4" stroke-width="1.1"/><path d="M4.6 7.4A2 2 0 0 1 6.6 4.6L9.4 7.6" fill="none" stroke="#c4c4c4" stroke-width="1"/></svg>
</div>
<div id="pw">
<svg class="abs" style="left:6.10px;top:7.00px" width="12" height="12" viewBox="0 0 12 12"><circle cx="6" cy="6" r="5.8" fill="#ee5b54"/><path d="M3.6 3.6L8.4 8.4M8.4 3.6L3.6 8.4" stroke="#8c1a12" stroke-width="1.3"/></svg>
<svg class="abs" style="left:25.25px;top:7.00px" width="12" height="12" viewBox="0 0 12 12"><circle cx="6" cy="6" r="5.8" fill="#f6b82d"/><path d="M2.8 6H9.2" stroke="#985d06" stroke-width="1.3"/></svg>
<svg class="abs" style="left:44.40px;top:7.00px" width="12" height="12" viewBox="0 0 12 12"><circle cx="6" cy="6" r="5.8" fill="#27c03f"/><path d="M2.8 6H9.2M6 2.8V9.2" stroke="#0b5f14" stroke-width="1.3"/></svg>
<div class="panel"></div>
<span class="t" style="left:17.20px;top:36.42px;font-size:15.1px;color:#d2d2d2;transform:scaleX(.905);transform-origin:0 0;text-shadow:0 0 .4px #d2d2d2">Music Cue Sheet Uploader</span>
<svg class="abs" style="left:193.7px;top:40px" width="11" height="11" viewBox="0 0 11 11"><path d="M0 1.6H10.4M0 5.4H10.4M0 9.2H10.4" stroke="#d0d0d0" stroke-width="1.3"/></svg>
<div class="abs" style="left:10.5px;top:66px;width:26px;height:8.6px;border-radius:4.3px;background:#ff0a8a"></div>
<div class="abs" style="left:10.5px;top:75.4px;width:17.6px;height:8.3px;border-radius:4.2px;background:#c4009e"></div>
<div class="abs" style="left:10.5px;top:84.5px;width:26px;height:8.6px;border-radius:4.3px;background:#3a00a2"></div>
<div class="btn" style="left:45.00px;width:102px;top:64px;height:30px;line-height:30px"><span style="left:7.90px">Options</span><svg class="abs" style="left:79.19999999999999px;top:11.200000000000003px" width="15" height="9" viewBox="0 0 15 9"><path d="M1 1L7.5 7.5L14 1" fill="none" stroke="#dcdcdc" stroke-width="1.7"/></svg></div>
<div class="btn" style="left:150.75px;width:56.25px;top:64px;height:30px;line-height:30px"><span style="left:8.35px">Filter</span></div>
<div class="btn" style="left:210.00px;width:86px;top:64px;height:30px;line-height:30px"><span style="left:8.50px">Generate</span></div>
<div class="btn" style="left:299.75px;width:100.3px;top:64px;height:30px;line-height:30px"><span style="left:38.75px">Upload</span><svg class="abs" style="left:8.6px;top:5.6px" width="21" height="19" viewBox="0 0 21 19"><path d="M10.5 12.5V1.6M6.4 5.6L10.5 1.5L14.6 5.6" fill="none" stroke="#dcdcdc" stroke-width="1.8" stroke-linecap="round" stroke-linejoin="round"/><path d="M6.2 9.2H4A2.6 2.6 0 0 0 1.4 11.8V14.6A2.6 2.6 0 0 0 4 17.2H17A2.6 2.6 0 0 0 19.6 14.6V11.8A2.6 2.6 0 0 0 17 9.2H14.8" fill="none" stroke="#dcdcdc" stroke-width="1.8" stroke-linecap="round"/></svg></div>
<div class="btn" style="left:962.00px;width:153px;top:64px;height:30px;line-height:30px"><span style="left:7.50px">Upgrade to Listify</span></div>
<div class="btn" style="left:1119.00px;width:51px;top:64px;height:30px;line-height:30px"><span style="left:7.60px">Help</span></div>
<div class="btn" style="left:1060.00px;width:110px;top:112px;height:31px;line-height:31px"><span style="left:7.90px">Columns</span><svg class="abs" style="left:87px;top:11.599999999999994px" width="15" height="9" viewBox="0 0 15 9"><path d="M1 1L7.5 7.5L14 1" fill="none" stroke="#dcdcdc" stroke-width="1.7"/></svg></div>
<div class="abs" style="left:11px;top:109px;width:199.75px;height:36px;border:3px solid #474747;background:#232323"></div>
<span class="t" style="left:20.70px;top:119.83px;font-size:15.8px;color:#a4a4a4">Search</span>
<svg class="abs" style="left:184.5px;top:119.80000000000001px" width="16" height="16" viewBox="0 0 16 16"><path d="M1 1L15 15M15 1L1 15" stroke="#747474" stroke-width="1.8"/></svg>
<span class="t" style="left:11.00px;top:156.79px;font-size:15.6px;color:#e4e4e4;font-weight:700">My Film</span>
<span class="t" style="left:85.00px;top:156.54px;font-size:15.9px;color:#8f8f8f;letter-spacing:.26px">Duration: 00:44:08:13</span>
<div class="abs" style="left:10.70px;top:183px;width:1162.6px;height:528px;background:#474747"></div>
<div class="abs" style="left:13.20px;top:218.60px;width:1157.8px;height:478.3px;background:#232323"></div>
<div class="hc" style="left:13.20px;top:186px;width:32px"></div>
<div class="hc" style="left:49px;top:186px;width:44.2px"><span style="margin-left:7.8px">ID</span></div>
<div class="hc" style="left:97.00px;top:186px;width:134.10px"><span style="margin-left:8px">Clip Name</span></div>
<div class="hc" style="left:234.55px;top:186px;width:134.10px"><span style="margin-left:8px">File Name</span></div>
<div class="hc" style="left:372.10px;top:186px;width:134.10px"><span style="margin-left:8px">Media Type</span></div>
<div class="hc" style="left:509.65px;top:186px;width:134.10px"><span style="margin-left:8px">Timecode In</span></div>
<div class="hc" style="left:647.20px;top:186px;width:134.10px"><span style="margin-left:8px">Timecode Out</span></div>
<div class="hc" style="left:784.75px;top:186px;width:134.10px"><span style="margin-left:8px">Duration</span></div>
<div class="hc" style="left:922.30px;top:186px;width:134.10px"><span style="margin-left:8px">Source Start</span></div>
<div class="hc" style="left:1059.85px;top:186px;width:111.15px"><span style="margin-left:8px">Source End</span></div>
<div class="row" style="left:13.20px;top:219.00px;height:31.86px"><i></i><b style="left:43.6px">1</b><b style="left:92.1px">BIB_BIB_0264...</b><b style="left:229.7px">BIB_BIB_0264...</b><b style="left:367.2px">Audio</b><b class="n" style="left:504.8px">10:00:34:17</b><b class="n" style="left:642.3px">10:03:12:06</b><b class="n" style="left:779.8px">00:02:37:14</b><b class="n" style="left:917.4px">00:00:21:04</b><b class="n" style="left:1055.0px">00:02:58:18</b></div>
<div class="row" style="left:13.20px;top:250.86px;height:31.86px"><i></i><b style="left:43.6px">2</b><b style="left:92.1px">BIB_IOM_0021...</b><b style="left:229.7px">BIB_IOM_0021...</b><b style="left:367.2px">Audio</b><b class="n" style="left:504.8px">10:04:01:07</b><b class="n" style="left:642.3px">10:07:15:19</b><b class="n" style="left:779.8px">00:03:14:12</b><b class="n" style="left:917.4px">00:00:00:00</b><b class="n" style="left:1055.0px">00:03:14:12</b></div>
<div class="row" style="left:13.20px;top:282.71px;height:31.86px"><i></i><b style="left:43.6px">3</b><b style="left:92.1px">BRU_HKD_00...</b><b style="left:229.7px">BRU_HKD_00...</b><b style="left:367.2px">Audio</b><b class="n" style="left:504.8px">10:07:05:02</b><b class="n" style="left:642.3px">10:09:34:03</b><b class="n" style="left:779.8px">00:02:29:01</b><b class="n" style="left:917.4px">00:00:00:00</b><b class="n" style="left:1055.0px">00:02:29:01</b></div>
<div class="row" style="left:13.20px;top:314.57px;height:31.86px"><i></i><b style="left:43.6px">4</b><b style="left:92.1px">Buried_Secret...</b><b style="left:229.7px">Buried_Secret...</b><b style="left:367.2px">Audio</b><b class="n" style="left:504.8px">10:09:55:12</b><b class="n" style="left:642.3px">10:13:09:24</b><b class="n" style="left:779.8px">00:03:14:12</b><b class="n" style="left:917.4px">00:00:00:00</b><b class="n" style="left:1055.0px">00:03:14:12</b></div>
<div class="row" style="left:13.20px;top:346.43px;height:31.86px"><i></i><b style="left:43.6px">5</b><b style="left:92.1px">FOLD_SHPE_...</b><b style="left:229.7px">FOLD_SHPE_...</b><b style="left:367.2px">Audio</b><b class="n" style="left:504.8px">10:15:20:24</b><b class="n" style="left:642.3px">10:16:59:05</b><b class="n" style="left:779.8px">00:01:38:06</b><b class="n" style="left:917.4px">00:00:00:00</b><b class="n" style="left:1055.0px">00:01:38:06</b></div>
<div class="row" style="left:13.20px;top:378.28px;height:31.86px"><i></i><b style="left:43.6px">6</b><b style="left:92.1px">Groovy_Drums...</b><b style="left:229.7px">Groovy_Drums...</b><b style="left:367.2px">Audio</b><b class="n" style="left:504.8px">10:16:59:05</b><b class="n" style="left:642.3px">10:19:44:07</b><b class="n" style="left:779.8px">00:02:45:02</b><b class="n" style="left:917.4px">00:00:29:10</b><b class="n" style="left:1055.0px">00:03:14:12</b></div>
<div class="row" style="left:13.20px;top:410.14px;height:31.86px"><i></i><b style="left:43.6px">7</b><b style="left:92.1px">GTP_GTP_007...</b><b style="left:229.7px">GTP_GTP_007...</b><b style="left:367.2px">Audio</b><b class="n" style="left:504.8px">10:20:24:10</b><b class="n" style="left:642.3px">10:21:57:06</b><b class="n" style="left:779.8px">00:01:32:21</b><b class="n" style="left:917.4px">00:00:40:03</b><b class="n" style="left:1055.0px">00:02:12:24</b></div>
<div class="row" style="left:13.20px;top:442.00px;height:31.86px"><i></i><b style="left:43.6px">8</b><b style="left:92.1px">GTP_GTP_028...</b><b style="left:229.7px">GTP_GTP_028...</b><b style="left:367.2px">Audio</b><b class="n" style="left:504.8px">10:22:42:17</b><b class="n" style="left:642.3px">10:25:11:18</b><b class="n" style="left:779.8px">00:02:29:01</b><b class="n" style="left:917.4px">00:00:45:11</b><b class="n" style="left:1055.0px">00:03:14:12</b></div>
<div class="row" style="left:13.20px;top:473.86px;height:31.86px"><i></i><b style="left:43.6px">9</b><b style="left:92.1px">MPATH_MPAT...</b><b style="left:229.7px">MPATH_MPAT...</b><b style="left:367.2px">Audio</b><b class="n" style="left:504.8px">10:27:09:09</b><b class="n" style="left:642.3px">10:29:57:03</b><b class="n" style="left:779.8px">00:02:47:19</b><b class="n" style="left:917.4px">00:00:26:18</b><b class="n" style="left:1055.0px">00:03:14:12</b></div>
<div class="row" style="left:13.20px;top:505.71px;height:31.86px"><i></i><b style="left:43.6px">10</b><b style="left:92.1px">RM_Texture__...</b><b style="left:229.7px">RM_Texture__...</b><b style="left:367.2px">Audio</b><b class="n" style="left:504.8px">10:29:43:08</b><b class="n" style="left:642.3px">10:32:57:20</b><b class="n" style="left:779.8px">00:03:14:12</b><b class="n" style="left:917.4px">00:00:00:00</b><b class="n" style="left:1055.0px">00:03:14:12</b></div>
<div class="row" style="left:13.20px;top:537.57px;height:31.86px"><i></i><b style="left:43.6px">11</b><b style="left:92.1px">MYMA_JUST_...</b><b style="left:229.7px">MYMA_JUST_...</b><b style="left:367.2px">Audio</b><b class="n" style="left:504.8px">10:32:16:04</b><b class="n" style="left:642.3px">10:35:30:16</b><b class="n" style="left:779.8px">00:03:14:12</b><b class="n" style="left:917.4px">00:00:00:00</b><b class="n" style="left:1055.0px">00:03:14:12</b></div>
<div class="row" style="left:13.20px;top:569.43px;height:31.86px"><i></i><b style="left:43.6px">12</b><b style="left:92.1px">Signature_Ben...</b><b style="left:229.7px">Signature_Ben...</b><b style="left:367.2px">Audio</b><b class="n" style="left:504.8px">10:34:55:22</b><b class="n" style="left:642.3px">10:37:32:06</b><b class="n" style="left:779.8px">00:02:36:09</b><b class="n" style="left:917.4px">00:00:00:00</b><b class="n" style="left:1055.0px">00:02:36:09</b></div>
<div class="row" style="left:13.20px;top:601.28px;height:31.86px"><i></i><b style="left:43.6px">13</b><b style="left:92.1px">SON_SCDV_12...</b><b style="left:229.7px">SON_SCDV_12...</b><b style="left:367.2px">Audio</b><b class="n" style="left:504.8px">10:37:32:06</b><b class="n" style="left:642.3px">10:38:41:01</b><b class="n" style="left:779.8px">00:01:08:20</b><b class="n" style="left:917.4px">00:00:42:19</b><b class="n" style="left:1055.0px">00:01:51:14</b></div>
<div class="row" style="left:13.20px;top:633.14px;height:31.86px"><i></i><b style="left:43.6px">14</b><b style="left:92.1px">SON_STT_007...</b><b style="left:229.7px">SON_STT_007...</b><b style="left:367.2px">Audio</b><b class="n" style="left:504.8px">10:38:41:01</b><b class="n" style="left:642.3px">10:40:54:01</b><b class="n" style="left:779.8px">00:02:13:00</b><b class="n" style="left:917.4px">00:01:01:12</b><b class="n" style="left:1055.0px">00:03:14:12</b></div>
<div class="row" style="left:13.20px;top:665.00px;height:31.86px"><i></i><b style="left:43.6px">15</b><b style="left:92.1px">Space_Monst...</b><b style="left:229.7px">Space_Monst...</b><b style="left:367.2px">Audio</b><b class="n" style="left:504.8px">10:40:54:01</b><b class="n" style="left:642.3px">10:44:08:13</b><b class="n" style="left:779.8px">00:03:14:12</b><b class="n" style="left:917.4px">00:00:00:00</b><b class="n" style="left:1055.0px">00:03:14:12</b></div>
<div class="abs" style="left:13.20px;top:697px;width:1157.8px;height:11.8px;background:#2b2b2b"></div>
<div class="abs" style="left:13.20px;top:697px;width:1033.5px;height:11.8px;background:#353535"></div>
</div>
<svg class="abs" style="left:1540px;top:720px" width="380" height="360" viewBox="0 0 1140 1080" role="img" aria-label="CUE"><defs>
<linearGradient id="nv" gradientUnits="userSpaceOnUse" x1="150" y1="0" x2="938" y2="0"><stop offset="0" stop-color="#0e0e48"/><stop offset=".45" stop-color="#0a0a36"/><stop offset="1" stop-color="#03031a"/></linearGradient>
<linearGradient id="wv" gradientUnits="userSpaceOnUse" x1="0" y1="600" x2="399" y2="201"><stop offset="0" stop-color="#f02a86"/><stop offset=".123" stop-color="#ee2a88"/><stop offset=".298" stop-color="#c01c92"/><stop offset=".474" stop-color="#8a1c9c"/><stop offset=".649" stop-color="#5024a2"/><stop offset=".825" stop-color="#2a28a2"/><stop offset="1" stop-color="#2229a0"/></linearGradient>
<filter id="ls" color-interpolation-filters="sRGB" x="-20%" y="-20%" width="150%" height="150%"><feGaussianBlur in="SourceAlpha" stdDeviation="18"/><feOffset dx="10" dy="20" result="o1"/><feComponentTransfer in="o1" result="s1"><feFuncA type="linear" slope=".5"/></feComponentTransfer><feGaussianBlur in="SourceAlpha" stdDeviation="7"/><feOffset dx="7" dy="10" result="o2"/><feComponentTransfer in="o2" result="s2"><feFuncA type="linear" slope=".5"/></feComponentTransfer><feMerge><feMergeNode in="s1"/><feMergeNode in="s2"/><feMergeNode in="SourceGraphic"/></feMerge></filter>
<filter id="ws2" color-interpolation-filters="sRGB" x="-20%" y="-20%" width="150%" height="150%"><feGaussianBlur in="SourceAlpha" stdDeviation="20"/><feOffset dx="6" dy="8"/><feComponentTransfer><feFuncA type="linear" slope="1.1"/></feComponentTransfer><feMerge><feMergeNode/><feMergeNode in="SourceGraphic"/></feMerge></filter>
<filter id="ws" color-interpolation-filters="sRGB" x="-20%" y="-20%" width="150%" height="150%"><feGaussianBlur in="SourceAlpha" stdDeviation="14"/><feOffset dx="8" dy="10"/><feComponentTransfer><feFuncA type="linear" slope=".7"/></feComponentTransfer><feMerge><feMergeNode/><feMergeNode in="SourceGraphic"/></feMerge></filter>
<radialGradient id="bay" cx=".5" cy=".5" r=".5"><stop offset="0" stop-color="#18186c" stop-opacity=".8"/><stop offset=".55" stop-color="#15155f" stop-opacity=".45"/><stop offset="1" stop-color="#101050" stop-opacity="0"/></radialGradient>
<filter id="fat" x="-10%" y="-10%" width="120%" height="120%"><feMorphology operator="dilate" radius="20 4"/></filter>
<clipPath id="lc"><path clip-rule="evenodd" d="M188 63H808A130 130 0 0 1 938 193V813A130 130 0 0 1 808 943H188A130 130 0 0 1 58 813V193A130 130 0 0 1 188 63ZM230.0 133H313.0A42.0 42.0 0 0 1 313.0 217H230.0A42.0 42.0 0 0 1 230.0 133ZM467.0 133H551.0A42.0 42.0 0 0 1 551.0 217H467.0A42.0 42.0 0 0 1 467.0 133ZM704.0 133H788.0A42.0 42.0 0 0 1 788.0 217H704.0A42.0 42.0 0 0 1 704.0 133ZM230.5 795H312.5A42.5 42.5 0 0 1 312.5 880H230.5A42.5 42.5 0 0 1 230.5 795ZM467.5 795H550.5A42.5 42.5 0 0 1 550.5 880H467.5A42.5 42.5 0 0 1 467.5 795ZM704.5 795H787.5A42.5 42.5 0 0 1 787.5 880H704.5A42.5 42.5 0 0 1 704.5 795Z"/></clipPath>
</defs><g filter="url(#ls)"><path fill-rule="evenodd" fill="url(#nv)" d="M188 63H808A130 130 0 0 1 938 193V813A130 130 0 0 1 808 943H188A130 130 0 0 1 58 813V193A130 130 0 0 1 188 63ZM230.0 133H313.0A42.0 42.0 0 0 1 313.0 217H230.0A42.0 42.0 0 0 1 230.0 133ZM467.0 133H551.0A42.0 42.0 0 0 1 551.0 217H467.0A42.0 42.0 0 0 1 467.0 133ZM704.0 133H788.0A42.0 42.0 0 0 1 788.0 217H704.0A42.0 42.0 0 0 1 704.0 133ZM230.5 795H312.5A42.5 42.5 0 0 1 312.5 880H230.5A42.5 42.5 0 0 1 230.5 795ZM467.5 795H550.5A42.5 42.5 0 0 1 550.5 880H467.5A42.5 42.5 0 0 1 467.5 795ZM704.5 795H787.5A42.5 42.5 0 0 1 787.5 880H704.5A42.5 42.5 0 0 1 704.5 795Z"/></g><g clip-path="url(#lc)"><ellipse cx="330" cy="315" rx="330" ry="190" fill="url(#bay)"/><ellipse cx="400" cy="690" rx="340" ry="190" fill="url(#bay)"/><ellipse cx="560" cy="890" rx="260" ry="120" fill="url(#bay)" opacity=".5"/></g><g clip-path="url(#lc)"><g filter="url(#ws2)"><path fill="url(#wv)" d="M58 193A130 130 0 0 1 188 63H400C440 63 455 100 455 145C455 200 420 225 380 225H235C180 225 150 265 150 312C150 360 185 400 240 400H330C390 400 420 445 420 500C420 555 385 600 330 600H300C245 600 212 640 212 690C212 740 245 780 300 780H350C400 780 425 815 425 860C425 905 420 943 395 943H188A130 130 0 0 1 58 813Z"/></g></g><g filter="url(#ws)"><rect x="405" y="298" width="615" height="410" rx="118" fill="#15155f"/></g><text y="636" font-family="Liberation Sans, sans-serif" font-weight="700" font-size="373.5" fill="#fff" filter="url(#fat)"><tspan x="503.2" textLength="111.3" lengthAdjust="spacingAndGlyphs">C</tspan><tspan x="656.3" textLength="132.9" lengthAdjust="spacingAndGlyphs">U</tspan><tspan x="833.6" textLength="89.9" lengthAdjust="spacingAndGlyphs">E</tspan></text></svg>
</body></html>
